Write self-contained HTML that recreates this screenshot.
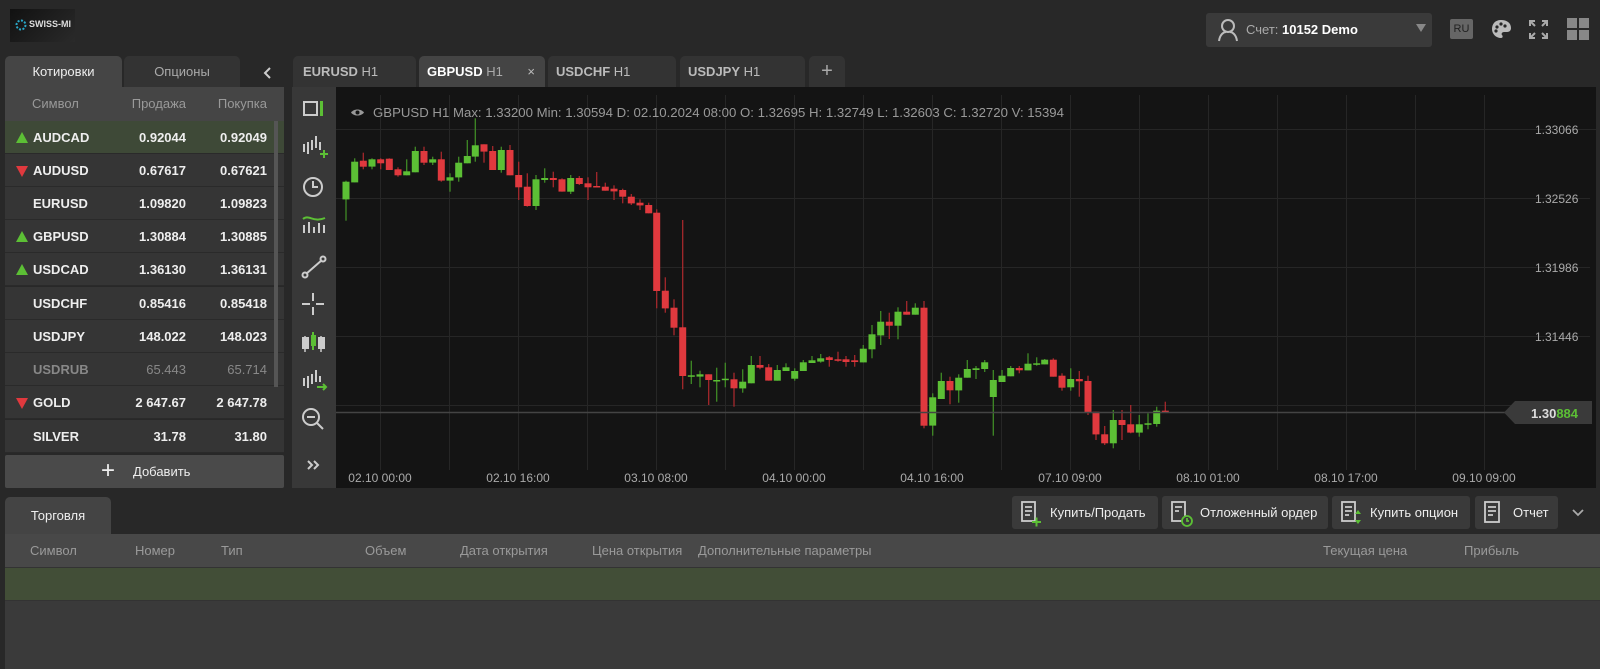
<!DOCTYPE html>
<html><head><meta charset="utf-8">
<style>
*{box-sizing:border-box;margin:0;padding:0}
body{width:1600px;height:669px;background:#282828;font-family:"Liberation Sans",Arial,sans-serif;color:#ddd;position:relative;overflow:hidden;font-size:13px}
.a{position:absolute}
.tab{position:absolute;top:56px;height:31px;border-radius:5px 5px 0 0;background:#333;color:#aaa;font-size:13px;line-height:31px}
.row{position:absolute;left:5px;width:279px;height:33px;background:#353535;border-bottom:1px solid #2a2a2a;font-weight:bold;font-size:13px;line-height:33px;color:#eee}
.row .s{position:absolute;left:28px}
.row .p{position:absolute;right:98px}
.row .b{position:absolute;right:17px}
.up{position:absolute;left:11px;top:11px;width:0;height:0;border-left:6px solid transparent;border-right:6px solid transparent;border-bottom:11px solid #5cbf35}
.dn{position:absolute;left:11px;top:12px;width:0;height:0;border-left:6px solid transparent;border-right:6px solid transparent;border-top:11px solid #e0393e}
.btn{position:absolute;top:496px;height:33px;background:#3a3a3a;border-radius:3px;color:#eee;font-size:13px;line-height:33px}
.th{position:absolute;top:543px;color:#9a9a9a;font-size:13px}
</style></head><body>
<div class="a" style="left:10px;top:9px;width:65px;height:33px;background:linear-gradient(135deg,#111,#2a2a2a)"></div>
<svg class="a" style="left:14px;top:18px" width="14" height="14" viewBox="0 0 14 14"><circle cx="7" cy="7" r="4.5" fill="none" stroke="#2aa8c8" stroke-width="2" stroke-dasharray="2 1.5"/></svg>
<div class="a" style="left:29px;top:19px;font-size:9px;font-weight:bold;color:#ddd">SWISS-MI</div>

<div class="a" style="left:1206px;top:13px;width:226px;height:34px;background:#3a3a3a;border-radius:3px"></div>
<svg class="a" style="left:1217px;top:18px" width="22" height="24" viewBox="0 0 22 24"><circle cx="11" cy="8" r="6" fill="none" stroke="#bbb" stroke-width="2"/><path d="M2 23 C3 16 7 14 9 14 M20 23 C19 16 15 14 13 14" fill="none" stroke="#bbb" stroke-width="2"/></svg>
<div class="a" style="left:1246px;top:22px;font-size:13px;color:#aaa">Счет: <b style="color:#fff">10152 Demo</b></div>
<div class="a" style="left:1416px;top:24px;width:0;height:0;border-left:5px solid transparent;border-right:5px solid transparent;border-top:8px solid #888"></div>
<div class="a" style="left:1450px;top:19px;width:23px;height:20px;background:#666;border-radius:2px;color:#222;font-size:11px;line-height:20px;text-align:center">RU</div>
<svg class="a" style="left:1490px;top:18px" width="22" height="22" viewBox="0 0 22 22"><path d="M11 2C5 2 2 6 2 11c0 5 4 9 9 9 2 0 2-2 1-3s0-3 2-3h3c3 0 4-2 4-4 0-5-4-8-10-8z" fill="#bbb"/><circle cx="7" cy="9" r="1.6" fill="#282828"/><circle cx="11" cy="6" r="1.6" fill="#282828"/><circle cx="15" cy="8" r="1.6" fill="#282828"/><circle cx="6" cy="13" r="1.6" fill="#282828"/></svg>
<svg class="a" style="left:1528px;top:19px" width="21" height="21" viewBox="0 0 21 21" fill="none" stroke="#aaa" stroke-width="2"><path d="M2 7V2h5M2 2l5 5M19 7V2h-5M19 2l-5 5M2 14v5h5M2 19l5-5M19 14v5h-5M19 19l-5-5"/></svg>
<svg class="a" style="left:1567px;top:18px" width="22" height="22" viewBox="0 0 22 22" fill="#888"><rect x="0" y="0" width="10" height="10"/><rect x="12" y="0" width="10" height="10"/><rect x="0" y="12" width="10" height="10"/><rect x="12" y="12" width="10" height="10"/></svg>

<div class="tab" style="left:5px;width:117px;background:#454545;color:#eee;text-align:center">Котировки</div>
<div class="tab" style="left:124px;width:116px;text-align:center">Опционы</div>
<svg class="a" style="left:262px;top:66px" width="10" height="14" viewBox="0 0 10 14"><path d="M8 2L3 7l5 5" stroke="#ccc" stroke-width="2" fill="none"/></svg>

<div class="a" style="left:5px;top:87px;width:279px;height:34px;background:#454545;color:#999;font-size:13px;line-height:34px">
<span class="a" style="left:27px">Символ</span><span class="a" style="right:98px">Продажа</span><span class="a" style="right:17px">Покупка</span></div>
<div class="row" style="top:121px;background:#3e4937"><i class="up"></i><span class="s">AUDCAD</span><span class="p">0.92044</span><span class="b">0.92049</span></div>
<div class="row" style="top:154px"><i class="dn"></i><span class="s">AUDUSD</span><span class="p">0.67617</span><span class="b">0.67621</span></div>
<div class="row" style="top:187px"><span class="s">EURUSD</span><span class="p">1.09820</span><span class="b">1.09823</span></div>
<div class="row" style="top:220px"><i class="up"></i><span class="s">GBPUSD</span><span class="p">1.30884</span><span class="b">1.30885</span></div>
<div class="row" style="top:253px"><i class="up"></i><span class="s">USDCAD</span><span class="p">1.36130</span><span class="b">1.36131</span></div>
<div class="row" style="top:287px"><span class="s">USDCHF</span><span class="p">0.85416</span><span class="b">0.85418</span></div>
<div class="row" style="top:320px"><span class="s">USDJPY</span><span class="p">148.022</span><span class="b">148.023</span></div>
<div class="row" style="top:353px;color:#888"><span class="s">USDRUB</span><span class="p" style="font-weight:normal">65.443</span><span class="b" style="font-weight:normal">65.714</span></div>
<div class="row" style="top:386px"><i class="dn"></i><span class="s">GOLD</span><span class="p">2 647.67</span><span class="b">2 647.78</span></div>
<div class="row" style="top:420px"><span class="s">SILVER</span><span class="p">31.78</span><span class="b">31.80</span></div>
<div class="a" style="left:274px;top:121px;width:4px;height:266px;background:#555"></div>
<div class="a" style="left:5px;top:455px;width:279px;height:33px;background:#4a4a4a;border-radius:2px;color:#eee;font-size:13px;line-height:33px"><span class="a" style="left:96px;font-size:24px;top:-1px">+</span><span class="a" style="left:128px">Добавить</span></div>

<div class="tab" style="left:293px;width:123px;padding-left:10px;color:#bbb"><b>EURUSD</b> H1</div>
<div class="tab" style="left:419px;width:126px;padding-left:8px;background:#444;color:#fff"><b>GBPUSD</b> <span style="color:#aaa">H1</span><span class="a" style="right:10px;color:#bbb">×</span></div>
<div class="tab" style="left:548px;width:128px;padding-left:8px;color:#bbb"><b>USDCHF</b> H1</div>
<div class="tab" style="left:680px;width:125px;padding-left:8px;color:#bbb"><b>USDJPY</b> H1</div>
<div class="tab" style="left:809px;width:36px;text-align:center;color:#aaa;font-size:20px">+</div>

<div class="a" style="left:292px;top:87px;width:44px;height:401px;background:#383838"></div>
<svg class="a" style="left:292px;top:87px" width="44" height="400" viewBox="0 0 44 400" fill="none" stroke="#ccc" stroke-width="2">
<rect x="12" y="15" width="13" height="13"/><rect x="28" y="14" width="3" height="15" fill="#5cbf35" stroke="none"/>
<path d="M12 65v-8M16 67v-12M20 63v-10M24 61v-12M28 63v-8"/><path d="M28 67h8M32 63v8" stroke="#5cbf35"/>
<circle cx="21" cy="100" r="9"/><path d="M21 94v6h5"/>
<path d="M12 146v-8M17 146v-11M22 146v-6M27 146v-10M32 146v-8"/><path d="M11 132c6-5 10 4 22-1" stroke="#5cbf35"/>
<path d="M14 187l16-14"/><circle cx="13" cy="188" r="2.5"/><circle cx="31" cy="172" r="2.5"/>
<path d="M10 217h8M24 217h8M21 206v8M21 220v8"/>
<path d="M13 249v16M29 249v16" stroke-width="1.5"/><rect x="11" y="251" width="5" height="10" fill="#ccc"/><rect x="27" y="251" width="5" height="10" fill="#ccc"/><path d="M21 245v18" stroke="#5cbf35"/><rect x="19" y="248" width="5" height="11" fill="#5cbf35" stroke="none"/>
<path d="M12 299v-8M16 301v-12M20 297v-10M24 295v-12M28 295v-6"/><path d="M25 300h9M31 297l3 3-3 3" stroke="#5cbf35"/>
<circle cx="19" cy="330" r="8"/><path d="M15 330h8M25 336l6 6"/>
<path d="M16 382l4-4-4-4M22 382l4-4-4-4" stroke-width="2"/>
</svg>

<div class="a" style="left:336px;top:87px;width:1260px;height:401px;background:#141414"></div>
<svg class="a" style="left:0;top:0" width="1600" height="669" viewBox="0 0 1600 669">
<g stroke="#262626" stroke-width="1">
<path d="M336 129.5H1596M336 198.5H1590M336 267.5H1590M336 336.5H1590M336 405.5H1590"/>
<path d="M380.5 95V470M449.5 95V470M518.5 95V470M587.5 95V470M656.5 95V470M725.5 95V470M794.5 95V470M863.5 95V470M932.5 95V470M1001.5 95V470M1070.5 95V470M1139.5 95V470M1208.5 95V470M1277.5 95V470M1346.5 95V470M1415.5 95V470M1484.5 95V470"/>
</g>
<g id="cd"></g>
<path d="M336 412.5H1505" stroke="#444" stroke-width="1.5"/>
<path d="M1515 401h77v23h-77l-11-11.5z" fill="#3a3a3a"/>
<text x="1531" y="418" font-size="13" font-weight="bold" fill="#ddd" font-family="Liberation Sans">1.30<tspan fill="#5cbf35">884</tspan></text>
<g font-family="Liberation Sans" font-size="12" fill="#aaa">
<text x="1535" y="134">1.33066</text><text x="1535" y="203">1.32526</text><text x="1535" y="272">1.31986</text><text x="1535" y="341">1.31446</text>
</g>
<g font-family="Liberation Sans" font-size="12" fill="#aaa" text-anchor="middle">
<text x="380" y="482">02.10 00:00</text><text x="518" y="482">02.10 16:00</text><text x="656" y="482">03.10 08:00</text><text x="794" y="482">04.10 00:00</text><text x="932" y="482">04.10 16:00</text><text x="1070" y="482">07.10 09:00</text><text x="1208" y="482">08.10 01:00</text><text x="1346" y="482">08.10 17:00</text><text x="1484" y="482">09.10 09:00</text>
</g>
<path d="M351 112.5c3-4 10-4 13 0c-3 4-10 4-13 0z" fill="#999"/><circle cx="357.5" cy="112.5" r="2" fill="#141414"/>
<text x="373" y="117" font-family="Liberation Sans" font-size="13" fill="#999" textLength="691" lengthAdjust="spacingAndGlyphs">GBPUSD  H1  Max: 1.33200  Min: 1.30594  D: 02.10.2024 08:00  O: 1.32695  H: 1.32749  L: 1.32603  C: 1.32720  V: 15394</text>
</svg>

<div class="a" style="left:5px;top:497px;width:106px;height:37px;background:#444;border-radius:5px 5px 0 0;color:#eee;font-size:13px;line-height:37px;text-align:center">Торговля</div>
<div class="btn" style="left:1012px;width:146px;padding-left:38px">Купить/Продать</div>
<div class="btn" style="left:1162px;width:166px;padding-left:38px">Отложенный ордер</div>
<div class="btn" style="left:1332px;width:138px;padding-left:38px">Купить опцион</div>
<div class="btn" style="left:1475px;width:83px;padding-left:38px">Отчет</div>
<svg class="a" style="left:0;top:0" width="1600" height="669" fill="none" stroke="#ccc" stroke-width="1.8">
<rect x="1022" y="502" width="13" height="19"/><path d="M1025 507h7M1025 511h7M1025 515h5"/><path d="M1032 522h9M1036.5 517.5v9" stroke="#5cbf35" stroke-width="2"/>
<rect x="1172" y="502" width="13" height="19"/><path d="M1175 507h7M1175 511h4"/><circle cx="1187" cy="521" r="5" stroke="#5cbf35" fill="#3a3a3a"/><path d="M1187 518v3h2" stroke="#5cbf35"/>
<rect x="1342" y="502" width="13" height="19"/><path d="M1345 507h7M1345 511h7M1345 515h4"/><path d="M1358 510l3 4h-6zM1358 524l3-4h-6z" fill="#5cbf35" stroke="none"/>
<rect x="1485" y="502" width="14" height="20"/><path d="M1488 507h8M1488 511h8M1488 515h5"/>
<path d="M1573 510l5 5 5-5" stroke="#aaa"/>
</svg>
<div class="a" style="left:5px;top:534px;width:1595px;height:33px;background:#484848"></div>
<div class="a" style="left:5px;top:567px;width:1595px;height:34px;background:#424e37;border-top:1px solid #333;border-bottom:1px solid #333"></div>
<div class="a" style="left:5px;top:601px;width:1595px;height:68px;background:#3a3a3a"></div>
<div class="th" style="left:30px">Символ</div><div class="th" style="left:135px">Номер</div><div class="th" style="left:221px">Тип</div><div class="th" style="left:365px">Объем</div><div class="th" style="left:460px">Дата открытия</div><div class="th" style="left:592px">Цена открытия</div><div class="th" style="left:698px">Дополнительные параметры</div><div class="th" style="left:1323px">Текущая цена</div><div class="th" style="left:1464px">Прибыль</div>

<script>
var A=[[330,90,"48 275 328 g 272 392|74 215 277 g 205 277|100 212 230 r 188 238|126 208 230 g 205 238|152 208 220 r 205 238|178 206 240 r 205 240|204 238 256 r 232 260|230 244 256 g 208 256|256 183 247 g 170 247|282 183 218 r 170 225|308 208 218 g 200 225|334 208 272 r 185 275|360 262 272 g 250 305|386 218 262 g 200 275|412 198 220 g 150 220|436 166 200 g 85 215|462 163 185 r 163 218|488 183 240 r 168 240|514 180 240 g 170 248|540 180 256 r 165 256|566 255 292 r 215 330|592 290 348 r 250 350|618 268 348 g 255 360|644 264 270 g 235 278|670 264 270 r 245 292|696 268 305 r 265 305|722 264 305 g 255 312|748 264 282 r 258 285|774 280 292 r 262 330|800 288 292 r 246 292|826 290 302 r 278 302|852 296 304 r 286 330|878 300 320 r 296 340|904 320 340 r 312 345|930 338 346 r 328 360|956 345 370 r 338 370|980 368 603 r 358 655|1006 602 655 r 562 668|1032 653 713 r 628 736|1058 712 858 r 390 898|1084 856 860 g 812 882|1110 853 860 g 842 892|1136 853 870 r 853 945|1160 870 872 g 833 935|1186 866 870 g 818 892|1212 868 895 r 848 950"],
[740,280,"8 305 325 g 268 338|34 255 310 g 228 310|60 255 263 r 228 268|86 262 302 r 252 302|112 270 302 g 255 302|138 262 273 g 250 273|164 273 296 g 265 302|190 247 273 g 240 273|216 241 249 g 228 249|242 235 245 g 222 248|268 232 240 r 228 260|294 238 241 r 215 245|318 238 246 r 228 260|344 241 246 r 225 260|370 206 247 g 195 247|396 163 208 g 135 235|422 125 166 g 93 195|448 125 137 r 98 177|474 95 137 g 82 178|500 95 104 r 63 104|526 83 104 g 70 104|552 83 437 r 63 445|578 352 437 g 340 467|604 303 357 g 278 357|630 303 331 r 290 373|656 293 331 g 283 368|682 267 293 g 240 293|708 265 270 g 258 297|734 247 267 g 240 276|760 300 351 g 270 467|786 287 306 g 270 306|812 264 289 g 258 289|838 264 271 r 258 280|864 251 271 g 220 271|890 250 253 g 232 257|914 239 253 g 237 253|940 239 290 r 235 290|966 287 323 r 280 332|992 297 322 g 265 332|1018 297 304 r 273 350|1044 303 397 r 287 405"],
[1080,380,"48 95 163 r 95 180|74 163 190 r 138 195|100 120 190 g 90 205|126 120 135 r 90 180|152 133 158 r 75 160|178 133 158 g 105 170|204 130 134 g 100 148|230 92 132 g 80 140|256 92 95 r 65 95"]];
var h="";
A.forEach(function(s){s[2].split("|").forEach(function(c){var p=c.split(" ");var x=s[0]+p[0]/3,t=s[1]+p[1]/3,b=s[1]+p[2]/3,wt=s[1]+p[4]/3,wb=s[1]+p[5]/3;var col=p[3]=="g"?"#5cbf35":"#e0393e";var wc=p[3]=="g"?"#3f8a25":"#a5282c";if(b-t<1.5)b=t+1.5;
h+='<path d="M'+x.toFixed(1)+' '+wt.toFixed(1)+'V'+wb.toFixed(1)+'" stroke="'+wc+'" stroke-width="1.3"/><rect x="'+(x-3.5).toFixed(1)+'" y="'+t.toFixed(1)+'" width="7" height="'+(b-t).toFixed(1)+'" fill="'+col+'"/>';});});
document.getElementById("cd").innerHTML=h;
</script>
</body></html>
